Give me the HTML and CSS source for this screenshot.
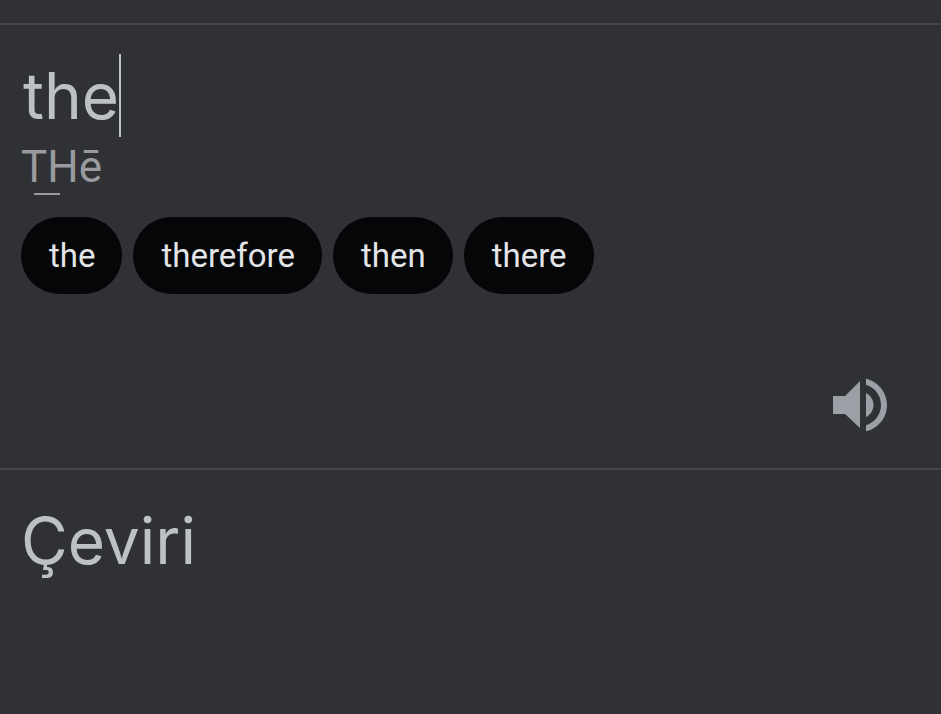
FILE: index.html
```html
<!DOCTYPE html>
<html lang="tr">

<head>
  <meta charset="UTF-8">
  <meta name="viewport" content="width=device-width, initial-scale=1.0">
  <title>Çeviri</title>
  <link rel="stylesheet" href="styles.css">
</head>

<body>

  <header class="topbar"></header>

  <main>
    <section class="source">
      <div class="field">
        <input type="text" class="word" value="the" size="1" aria-label="Metin" lang="en">
        <span class="caret"></span>
      </div>
      <p class="phonetic"><span class="digraph">TH</span>ē</p>
      <div class="suggestions" lang="en">
        <button type="button">the</button>
        <button type="button">therefore</button>
        <button type="button">then</button>
        <button type="button">there</button>
      </div>
      <div class="actions">
        <button type="button" class="listen" aria-label="Dinle">
          <svg viewBox="0 0 24 24" aria-hidden="true">
            <path d="M3 9v6h4l5 4.7V4L7 9H3zm13.5 3c0-1.77-1.02-3.29-2.5-4.03v8.05c1.48-.73 2.5-2.25 2.5-4.02zM14 3.23v2.06c2.89.86 5 3.54 5 6.71s-2.11 5.85-5 6.71v2.06c4.01-.91 7-4.49 7-8.77s-2.99-7.86-7-8.77z" />
          </svg>
        </button>
      </div>
    </section>

    <section class="target">
      <p class="result">Çeviri</p>
    </section>
  </main>

</body>

</html>
```

FILE: styles.css
```css
* {
  padding: 0;
  margin: 0;
  box-sizing: border-box;
}

body {
  background-color: #303135;
  font-family: Roboto, 'Liberation Sans', sans-serif;
}

.topbar {
  height: 25px;
  border-bottom: 2px solid #45464a;
}

.source {
  padding: 29px 21px 27px;
  border-bottom: 2px solid #45464a;
}

.field {
  display: flex;
}

.word,
.result {
  font-family: Inter, 'Liberation Sans', sans-serif;
  font-size: 64px;
  line-height: 83px;
  color: #bdc1c6;
}

.word {
  field-sizing: content;
  height: 83px;
  padding-left: 2px;
  border: none;
  outline: none;
  background: none;
}

.caret {
  width: 2px;
  background-color: #bdc1c6;
}

.phonetic {
  font-size: 44px;
  line-height: 60px;
  color: #9a9b9e;
}

/* short bar under the two letters that make one sound */
.digraph {
  padding-bottom: 2px;
  background: linear-gradient(#9a9b9e, #9a9b9e) 40% 100% / 26px 2px no-repeat;
}

.suggestions {
  display: flex;
  flex-wrap: wrap;
  gap: 11px;
  margin-top: 20px;
}

.suggestions button {
  height: 77px;
  padding: 0 27px 0 28px;
  border: none;
  border-radius: 38px;
  background-color: #050608;
  color: #e3e4e7;
  font-family: inherit;
  font-size: 33px;
}

.actions {
  display: flex;
  justify-content: flex-end;
  margin-top: 75px;
  padding-right: 24px;
}

.listen {
  width: 72px;
  height: 72px;
  border: none;
  background: none;
  cursor: pointer;
}

.listen svg {
  display: block;
  fill: #9aa0a6;
}

.target {
  padding: 29px 21px;
}
```
